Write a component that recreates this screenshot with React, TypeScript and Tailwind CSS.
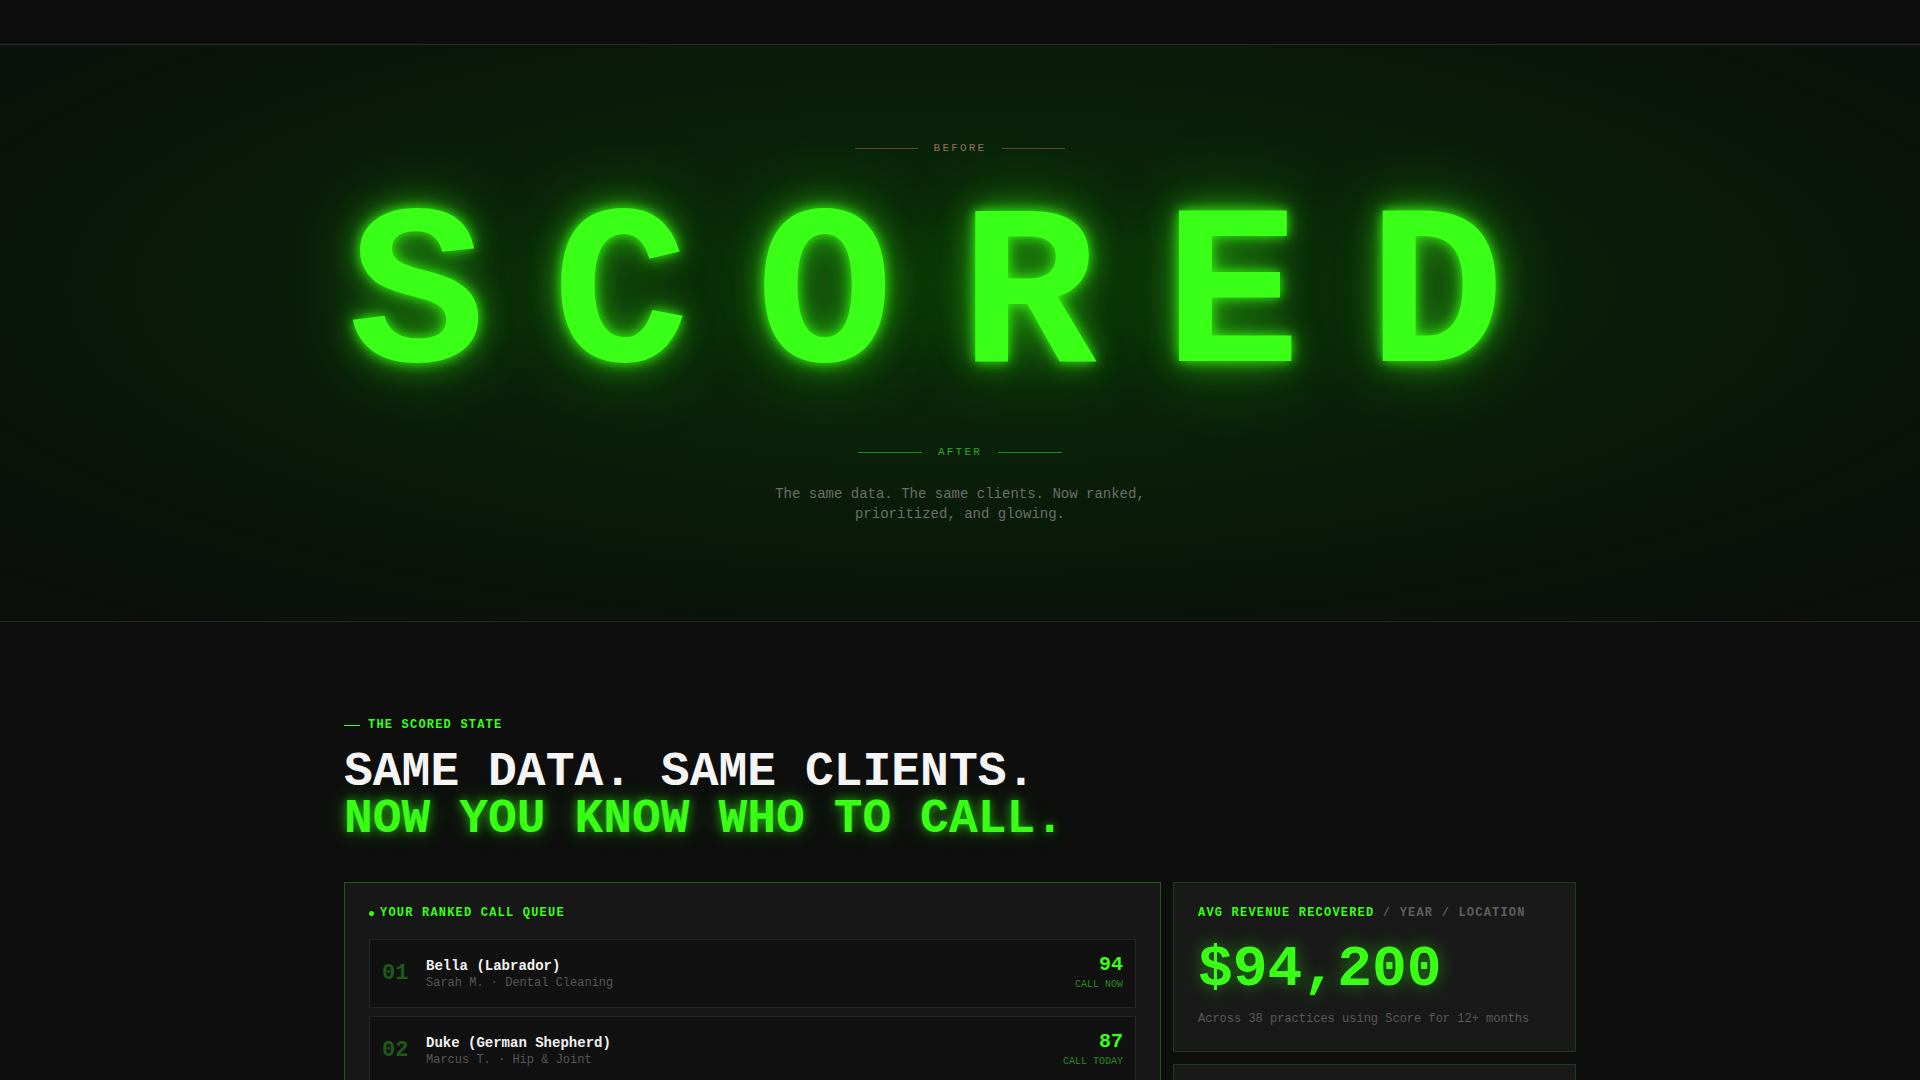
import React from 'react';

const mono = { fontFamily: '"Liberation Mono", "DejaVu Sans Mono", monospace' };

interface QueueItem {
  rank: string;
  pet: string;
  owner: string;
  service: string;
  score: number;
  action: string;
}

const queue: QueueItem[] = [
  { rank: '01', pet: 'Bella (Labrador)', owner: 'Sarah M.', service: 'Dental Cleaning', score: 94, action: 'CALL NOW' },
  { rank: '02', pet: 'Duke (German Shepherd)', owner: 'Marcus T.', service: 'Hip & Joint', score: 87, action: 'CALL TODAY' },
  { rank: '03', pet: 'Luna (Siamese)', owner: 'Priya K.', service: 'Annual Wellness', score: 81, action: 'THIS WEEK' },
  { rank: '04', pet: 'Max (Beagle)', owner: 'Dana R.', service: 'Vaccine Booster', score: 76, action: 'THIS WEEK' },
];

export default function App() {
  return (
    <div className="min-h-screen bg-[#0e0e0e] text-white" style={mono}>
      <div className="h-[45px] bg-[#0d0d0d] border-b border-[#2c2c2c]" />

      <Hero />

      <section className="border-t border-[#262626] bg-[#0e0e0e] pt-[95px] pb-24">
        <div className="mx-auto max-w-[1280px] px-6">
          <div className="flex items-center gap-2 mb-4">
            <span className="w-4 h-px bg-[#39ff14]" />
            <span className="text-xs leading-4 font-bold tracking-[0.1em] text-[#39ff14]">
              THE SCORED STATE
            </span>
          </div>
          <h2 className="text-[48px] leading-[48px] font-bold -mt-px">
            <span className="block text-[#f5f5f5]">SAME DATA. SAME CLIENTS.</span>
            <span className="block -mt-px text-[#39ff14] [text-shadow:0_0_10px_rgba(57,255,20,0.6),0_0_24px_rgba(57,255,20,0.35)]">
              NOW YOU KNOW WHO TO CALL.
            </span>
          </h2>

          <div className="mt-[39px] grid grid-cols-[1fr_403px] gap-3 items-start">
            <div className="bg-[#171717] border border-[#1f5c18] px-6 pt-[22px] pb-6">
              <div className="flex items-center gap-[6px] mb-[18px]">
                <span className="w-[5px] h-[5px] rounded-full bg-[#39ff14]" />
                <span className="text-xs leading-4 font-bold tracking-[0.1em] text-[#39ff14]">
                  YOUR RANKED CALL QUEUE
                </span>
              </div>
              <ul className="grid gap-2">
                {queue.map((q) => (
                  <QueueRow key={q.rank} item={q} />
                ))}
              </ul>
            </div>

            <div className="grid gap-3">
              <div className="bg-[#191919] border border-[#233a22] px-6 pt-[22px] pb-6">
                <div className="text-xs leading-4 font-bold tracking-[0.1em]">
                  <span className="text-[#39ff14]">AVG REVENUE RECOVERED</span>
                  <span className="text-[#5f5f5f]"> / YEAR / LOCATION</span>
                </div>
                <div className="mt-5 text-[58px] leading-none font-bold text-[#39ff14] [text-shadow:0_0_18px_rgba(57,255,20,0.45)]">
                  $94,200
                </div>
                <div className="mt-3 text-xs leading-4 text-[#5a5a5a]">
                  Across 38 practices using Score for 12+ months
                </div>
              </div>
              <div className="bg-[#191919] border border-[#233a22] px-6 pt-[22px] pb-6">
                <div className="text-xs leading-4 font-bold tracking-[0.1em] text-[#39ff14]">
                  CALL-TO-BOOKING RATE
                </div>
                <div className="mt-5 text-[58px] leading-none font-bold text-[#39ff14]">3.4×</div>
                <div className="mt-3 text-xs leading-4 text-[#5a5a5a]">vs. unranked reminder lists</div>
              </div>
            </div>
          </div>
        </div>
      </section>
    </div>
  );
}

function Hero() {
  return (
    <section className="bg-[radial-gradient(ellipse_70%_75%_at_50%_42%,#0a2c08_0%,#0a2009_40%,#0a150a_70%,#0c0f0c_100%)] pt-[95px] pb-[97px] flex flex-col items-center">
      <div className="flex items-center gap-4">
        <span className="w-[63px] h-px bg-[#5e4535]" />
        <span className="text-[11px] leading-4 tracking-[0.2em] text-[#94705a]">BEFORE</span>
        <span className="w-[63px] h-px bg-[#5e4535]" />
      </div>

      <h1 className="mt-[30px] text-[228px] leading-none font-bold tracking-[67px] text-[#3aff16] [text-shadow:0_0_12px_rgba(57,255,20,0.9),0_0_32px_rgba(57,255,20,0.6),0_0_80px_rgba(57,255,20,0.35)]">
        SCORED
      </h1>

      <div className="mt-[30px] flex items-center gap-4">
        <span className="w-[64px] h-px bg-[#1f8a1c]" />
        <span className="text-[11px] leading-4 tracking-[0.2em] text-[#2fa82a]">AFTER</span>
        <span className="w-[64px] h-px bg-[#1f8a1c]" />
      </div>

      <p className="mt-[25px] max-w-[420px] text-center text-sm leading-[19.6px] text-[#6b6f6b]">
        The same data. The same clients. Now ranked, prioritized, and glowing.
      </p>
    </section>
  );
}

function QueueRow({ item }: { item: QueueItem }) {
  return (
    <li className="flex items-center gap-3 bg-[#111111] border border-[#262626] px-3 py-[15px]">
      <div className="w-8 text-[22px] leading-none font-bold text-[#1f5a1a]">{item.rank}</div>
      <div className="min-w-0 flex-1">
        <div className="text-sm leading-[18px] font-bold text-[#f2f2f2] truncate">{item.pet}</div>
        <div className="text-xs leading-4 text-[#575757]">
          {item.owner} · {item.service}
        </div>
      </div>
      <div className="text-right">
        <div className="text-[20px] leading-5 font-bold text-[#39ff14]">{item.score}</div>
        <div className="mt-[3px] text-[10px] leading-[14px] text-[#2a8a24]">{item.action}</div>
      </div>
    </li>
  );
}
